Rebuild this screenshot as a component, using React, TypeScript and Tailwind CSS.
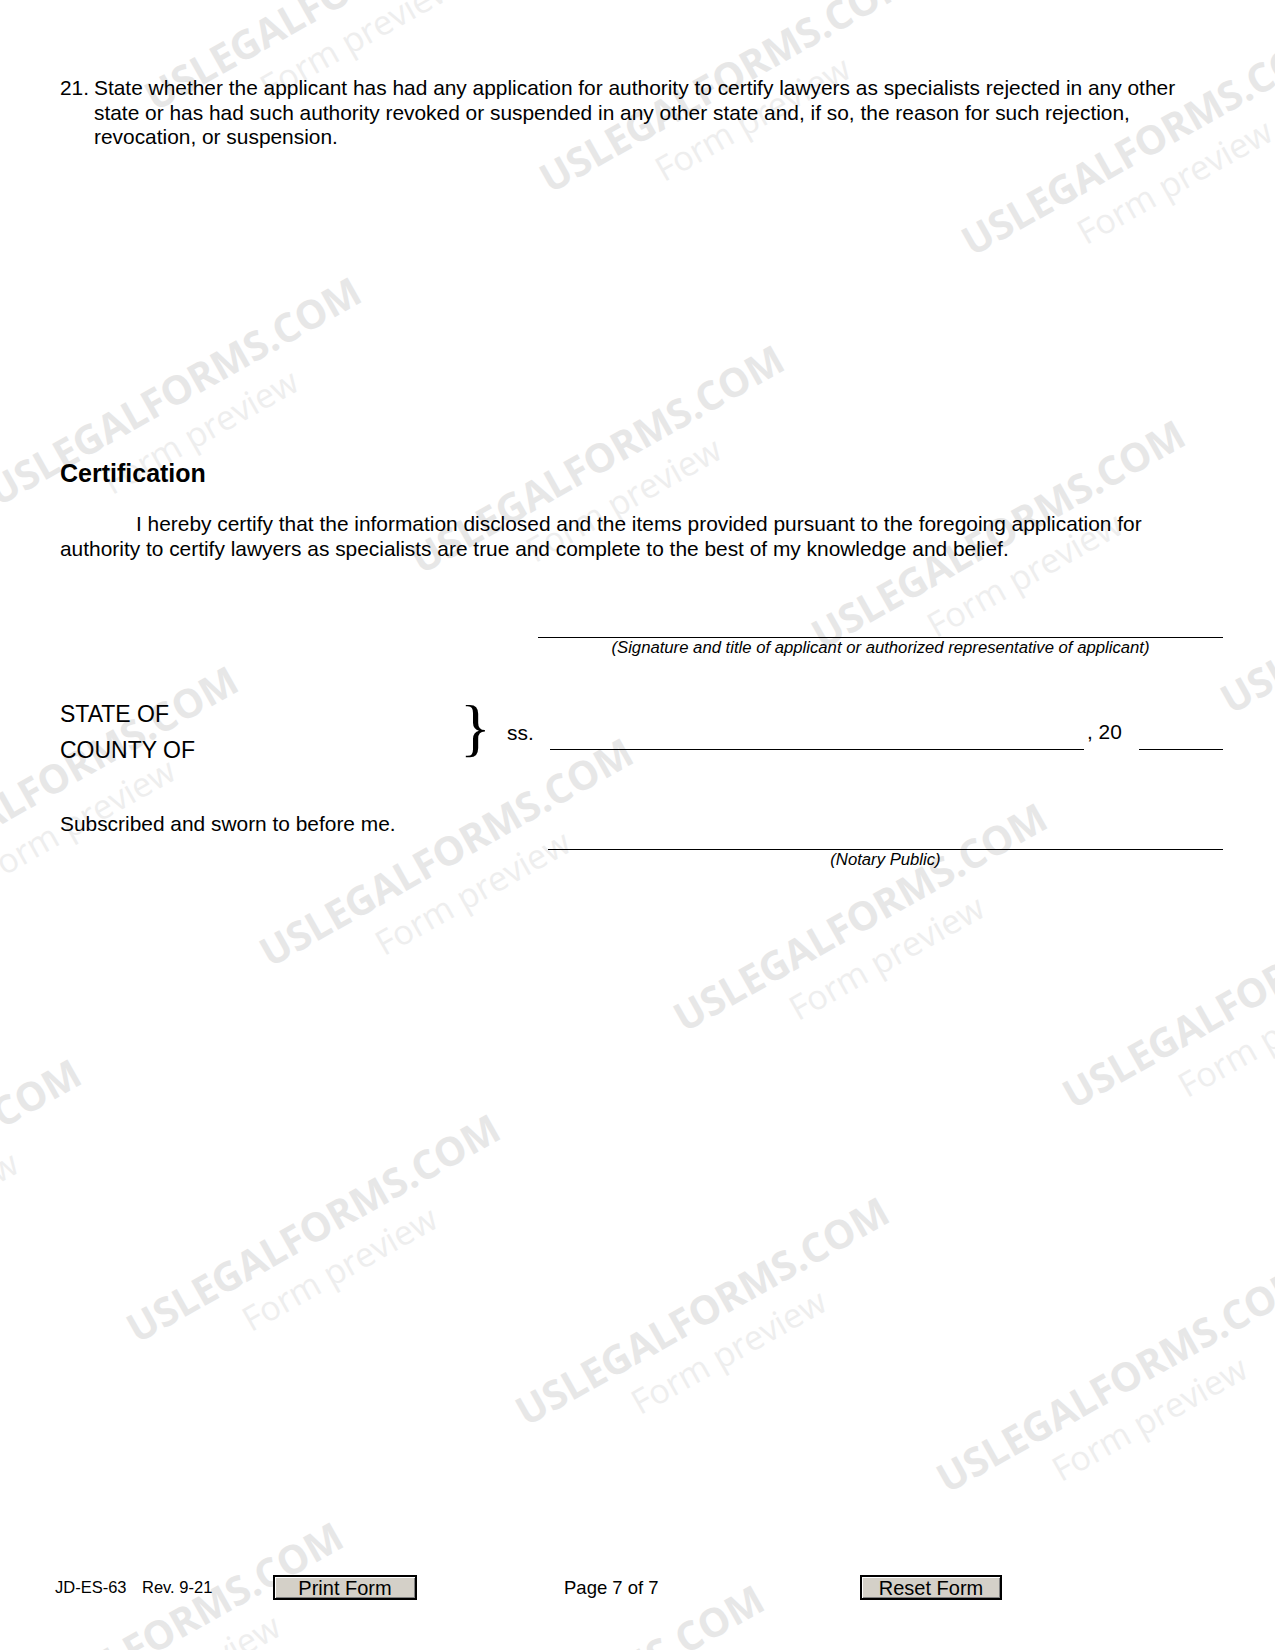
const marks: [number, number][] = [
  [155, 112], [550, 194], [972, 257],
  [-2, 507], [421, 575], [822, 650], [1231, 715],
  [-125, 896], [270, 968], [684, 1033], [1073, 1110],
  [-282, 1289], [137, 1344], [526, 1427], [947, 1494],
  [-20, 1752], [401, 1815],
];

function Watermark({ x, y }: { x: number; y: number }) {
  // x,y = start of the main line's baseline
  return (
    <div
      className="absolute origin-[0_35px] -rotate-[29.4deg] whitespace-nowrap font-['Open_Sans',sans-serif] leading-none select-none"
      style={{ left: x, top: y - 35 }}
    >
      <div className="text-[39.8px] font-bold text-[#e7e7e7]">USLEGALFORMS.COM</div>
      <div className="absolute left-[105px] top-[51px] text-[34px] font-normal text-[#eeeeee]">Form preview</div>
    </div>
  );
}

function FormButton({ label, w }: { label: string; w: string }) {
  return (
    <button
      type="button"
      className={`${w} h-[25px] border-2 border-black bg-[#d4d0c8] text-[20px] leading-none text-black shadow-[inset_1px_1px_0_#ffffff,inset_-1px_-1px_0_#808080]`}
    >
      {label}
    </button>
  );
}

export default function App() {
  return (
    <div className="relative flex h-[1650px] w-[1275px] flex-col overflow-hidden bg-white font-['Liberation_Sans',Arial,sans-serif] text-black">
      <div className="pointer-events-none absolute inset-0">
        {marks.map(([x, y], i) => (
          <Watermark key={i} x={x} y={y} />
        ))}
      </div>

      <div className="relative z-10 px-[60px]">
        {/* item 21 */}
        <div className="mt-[76px] flex text-[20.9px] leading-[24.7px]">
          <span className="w-[34px] flex-none">21.</span>
          <div className="whitespace-nowrap">
            <div>State whether the applicant has had any application for authority to certify lawyers as specialists rejected in any other</div>
            <div>state or has had such authority revoked or suspended in any other state and, if so, the reason for such rejection,</div>
            <div>revocation, or suspension.</div>
          </div>
        </div>

        <h2 className="mt-[308px] text-[25px] font-bold leading-[30px]">Certification</h2>

        <div className="mt-[23px] whitespace-nowrap text-[20.9px] leading-[25px]">
          <div className="pl-[76px]">I hereby certify that the information disclosed and the items provided pursuant to the foregoing application for</div>
          <div>authority to certify lawyers as specialists are true and complete to the best of my knowledge and belief.</div>
        </div>

        <div className="ml-[478px] mt-[76px] w-[685px] border-t border-black text-center text-[16.7px] italic leading-[20px]">
          (Signature and title of applicant or authorized representative of applicant)
        </div>

        <div className="mt-[38px] flex h-[72px] items-start">
          <div className="w-[400px] flex-none text-[23px] leading-[36px]">
            <div>STATE OF</div>
            <div>COUNTY OF</div>
          </div>
          <div className="w-[47px] flex-none font-['Liberation_Serif',serif] text-[64px] leading-none">{"}"}</div>
          <span className="mt-[25px] w-[43px] flex-none text-[20.9px] leading-[24px]">ss.</span>
          <div className="mt-[53px] h-px w-[534px] flex-none bg-black" />
          <span className="ml-[3px] mt-[24px] w-[52px] flex-none text-[20.9px] leading-[24px]">, 20</span>
          <div className="mt-[53px] h-px w-[84px] flex-none bg-black" />
        </div>

        <div className="mt-[44px] text-[20.9px] leading-[24px]">Subscribed and sworn to before me.</div>

        <div className="ml-[488px] mt-[13px] w-[675px] border-t border-black text-center text-[16.7px] italic leading-[20px]">
          (Notary Public)
        </div>
      </div>

      <div className="relative z-10 mb-[50px] mt-auto flex h-[25px] items-center pl-[55px]">
        <span className="w-[87px] flex-none text-[16.5px]">JD-ES-63</span>
        <span className="w-[131px] flex-none text-[16.5px]">Rev. 9-21</span>
        <FormButton label="Print Form" w="w-[144px]" />
        <span className="ml-[147px] w-[296px] flex-none text-[18.5px]">Page 7 of 7</span>
        <FormButton label="Reset Form" w="w-[142px]" />
      </div>
    </div>
  );
}
